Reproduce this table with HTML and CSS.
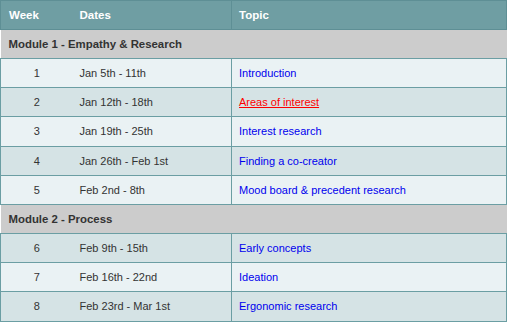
FILE: index.html
```html
<!DOCTYPE html>
<html>
<head>
<meta charset="utf-8">
<link rel="stylesheet" href="styles.css">
</head>
<body>
<table class="schedule">
  <thead>
    <tr class="head">
      <th class="c-week">Week</th>
      <th class="c-dates">Dates</th>
      <th class="c-topic">Topic</th>
    </tr>
  </thead>
  <tbody>
    <tr class="module"><td colspan="3">Module 1 - Empathy &amp; Research</td></tr>
    <tr class="odd"><td class="c-week">1</td><td class="c-dates">Jan 5th - 11th</td><td class="c-topic"><a href="#">Introduction</a></td></tr>
    <tr class="even"><td class="c-week">2</td><td class="c-dates">Jan 12th - 18th</td><td class="c-topic"><a href="#" class="active">Areas of interest</a></td></tr>
    <tr class="odd"><td class="c-week">3</td><td class="c-dates">Jan 19th - 25th</td><td class="c-topic"><a href="#">Interest research</a></td></tr>
    <tr class="even"><td class="c-week">4</td><td class="c-dates">Jan 26th - Feb 1st</td><td class="c-topic"><a href="#">Finding a co-creator</a></td></tr>
    <tr class="odd"><td class="c-week">5</td><td class="c-dates">Feb 2nd - 8th</td><td class="c-topic"><a href="#">Mood board &amp; precedent research</a></td></tr>
    <tr class="module"><td colspan="3">Module 2 - Process</td></tr>
    <tr class="even"><td class="c-week">6</td><td class="c-dates">Feb 9th - 15th</td><td class="c-topic"><a href="#">Early concepts</a></td></tr>
    <tr class="odd"><td class="c-week">7</td><td class="c-dates">Feb 16th - 22nd</td><td class="c-topic"><a href="#">Ideation</a></td></tr>
    <tr class="even"><td class="c-week">8</td><td class="c-dates">Feb 23rd - Mar 1st</td><td class="c-topic"><a href="#">Ergonomic research</a></td></tr>
  </tbody>
</table>
</body>
</html>
```
FILE: styles.css
```css
html, body {
  margin: 0;
  padding: 0;
  background: #ffffff;
}
body {
  font-family: "Liberation Sans", Arial, sans-serif;
  font-size: 11px;
  color: #333333;
}
.schedule {
  width: 507px;
  border-collapse: collapse;
  table-layout: fixed;
}
.schedule th,
.schedule td {
  height: 29px;
  padding: 0 7px;
  box-sizing: border-box;
  vertical-align: middle;
}
.c-week { width: 72px; }
.c-dates { width: 159px; }
.head th {
  background: #6f9ea3;
  color: #ffffff;
  font-size: 11.5px;
  font-weight: bold;
  text-align: left;
  border: 1px solid #5e8f95;
}
.head th.c-week { border-right: none; padding-left: 8px; }
.head th.c-dates { border-left: none; }
.module td {
  background: #cccccc;
  font-size: 11.4px;
  font-weight: bold;
  color: #333333;
  padding-left: 8px;
  height: 29px;
  border: none;
}
.odd td { background: #eaf2f4; }
.even td { background: #d5e3e5; }
.odd td, .even td {
  height: 29.2px;
  border: 1px solid #6b9ea3;
}
.odd td.c-week, .even td.c-week { border-right: none; text-align: center; }
.odd td.c-dates, .even td.c-dates { border-left: none; }
a {
  color: #0000ee;
  text-decoration: none;
}
a.active {
  color: #ff0000;
  text-decoration: underline;
}
```
